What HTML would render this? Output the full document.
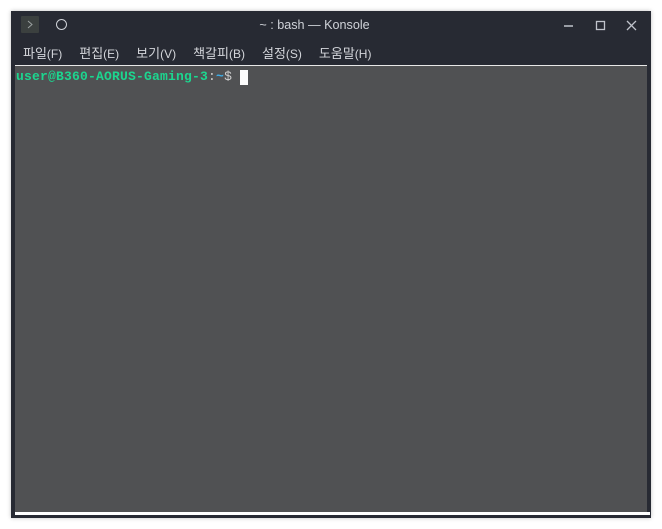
<!DOCTYPE html>
<html><head><meta charset="utf-8"><style>
html,body{margin:0;padding:0;background:#fff;width:662px;height:529px;overflow:hidden}
.win{position:absolute;left:11px;top:11px;width:640px;height:507px;background:#272a33;box-shadow:0 0 4px rgba(0,0,0,.25)}
.title{position:absolute;left:0;top:0;width:640px;height:30px;color:#cfd2d8;font:12.6px "Liberation Sans",sans-serif}
.title .t{position:absolute;left:0;width:607px;text-align:center;top:7px}
.menu{position:absolute;top:32px;left:12px;color:#d3d5da;font:13px "Liberation Sans","Noto Sans CJK KR",sans-serif;white-space:nowrap}
.menu span{margin-right:17px}
.menu small{font-size:12px}
.term{position:absolute;left:4px;top:54px;width:632px;height:448px;background:#505153;border-top:1px solid #e8e8e8}
.bot{position:absolute;left:4px;top:501px;width:635px;height:3px;background:#fff}
.prompt{position:absolute;left:1px;top:3px;font:bold 13px "Liberation Mono",monospace;letter-spacing:0.2px;color:#1cd68f;white-space:nowrap}
.prompt .c{color:#d0d0d0;font-weight:normal}
.prompt .b{color:#3daee9}
.cur{position:absolute;left:225px;top:4px;width:8px;height:15px;background:#fcfcfc}
</style></head><body>
<div class="win">
 <div class="title">
  <div style="position:absolute;left:10px;top:5px;width:18px;height:17px;background:#3b403f;border-radius:1px"></div>
  <svg style="position:absolute;left:10px;top:5px" width="18" height="17"><path d="M7 5l4 3.5-4 3.5" stroke="#9aa0a0" fill="none" stroke-width="1"/></svg>
  <div style="position:absolute;left:45px;top:8px;width:9px;height:9px;border:1.3px solid #cfd2d8;border-radius:50%"></div>
  <div class="t">~ : bash — Konsole</div>
  <svg style="position:absolute;left:550px;top:7px" width="80" height="16"><path d="M3 8h9" stroke="#c0c4cc" stroke-width="1.5"/><rect x="35.5" y="3.5" width="8" height="8" stroke="#c0c4cc" fill="none" stroke-width="1.3"/><path d="M66 3l9 9M75 3l-9 9" stroke="#c0c4cc" stroke-width="1.3"/></svg>
 </div>
 <div class="menu"><span>파일<small>(F)</small></span><span>편집<small>(E)</small></span><span>보기<small>(V)</small></span><span>책갈피<small>(B)</small></span><span>설정<small>(S)</small></span><span>도움말<small>(H)</small></span></div>
 <div class="term"><div class="prompt">user@B360-AORUS-Gaming-3<span class="c">:</span><span class="b">~</span><span class="c">$</span></div><div class="cur"></div></div>
 <div class="bot"></div>
</div>
</body></html>
